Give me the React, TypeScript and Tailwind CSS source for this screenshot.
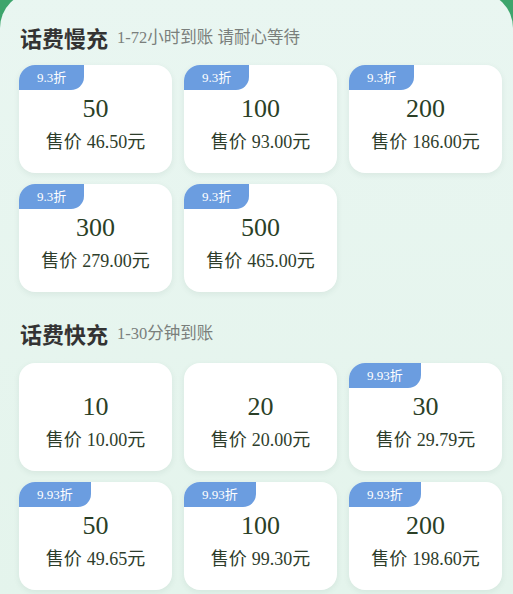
import React from "react";

type Item = { face: string; price: string; badge?: string };

const slow: Item[] = [
  { face: "50", price: "46.50", badge: "9.3折" },
  { face: "100", price: "93.00", badge: "9.3折" },
  { face: "200", price: "186.00", badge: "9.3折" },
  { face: "300", price: "279.00", badge: "9.3折" },
  { face: "500", price: "465.00", badge: "9.3折" },
];

const fast: Item[] = [
  { face: "10", price: "10.00" },
  { face: "20", price: "20.00" },
  { face: "30", price: "29.79", badge: "9.93折" },
  { face: "50", price: "49.65", badge: "9.93折" },
  { face: "100", price: "99.30", badge: "9.93折" },
  { face: "200", price: "198.60", badge: "9.93折" },
];

function Card({ item }: { item: Item }) {
  return (
    <div className="relative h-[108px] rounded-[16px] bg-white shadow-[0_2px_6px_rgba(40,80,60,0.08)] flex flex-col items-center [font-family:'Liberation_Serif','Noto_Sans_CJK_SC',serif]">
      {item.badge && (
        <div className="absolute left-0 top-0 h-[25px] px-[18px] flex items-center rounded-tl-[16px] rounded-br-[13px] bg-[#6b9de0] text-white text-[13px] leading-none">
          {item.badge}
        </div>
      )}
      <div className="mt-[28px] text-[26px] leading-[32px] text-[#2b3f27]">{item.face}</div>
      <div className="mt-[3px] text-[18px] leading-[24px] text-[#2e3d2b] flex items-baseline">
        <span className="[font-family:'Noto_Sans_CJK_SC',sans-serif]">售价</span>
        <span className="ml-[5px]">{item.price}</span>
        <span className="[font-family:'Noto_Sans_CJK_SC',sans-serif]">元</span>
      </div>
    </div>
  );
}

function Header({ title, sub }: { title: string; sub: string }) {
  return (
    <div className="h-[28px] flex items-center gap-[9px] pl-[1px]">
      <span className="text-[22px] font-bold text-[#333333] leading-none [font-family:'Noto_Sans_CJK_SC',sans-serif]">
        {title}
      </span>
      <span className="text-[16.5px] text-[#7a7f7c] leading-none mt-[2px] [font-family:'Liberation_Serif','Noto_Sans_CJK_SC',sans-serif]">
        {sub}
      </span>
    </div>
  );
}

export default function App() {
  return (
    <div className="w-[513px] h-[594px] overflow-hidden bg-[#3da56c]">
      <div className="mt-[-8px] h-[610px] rounded-t-[36px] bg-gradient-to-b from-[#e9f6f1] to-[#e4f4ec] pl-[19px] pr-[11px] pt-[31px]">
        <Header title="话费慢充" sub="1-72小时到账 请耐心等待" />
        <div className="mt-[14px] grid grid-cols-3 gap-x-[12px] gap-y-[11px]">
          {slow.map((it, i) => (
            <Card key={i} item={it} />
          ))}
        </div>
        <div className="mt-[27px]">
          <Header title="话费快充" sub="1-30分钟到账" />
        </div>
        <div className="mt-[16px] grid grid-cols-3 gap-x-[12px] gap-y-[11px]">
          {fast.map((it, i) => (
            <Card key={i} item={it} />
          ))}
        </div>
      </div>
    </div>
  );
}
